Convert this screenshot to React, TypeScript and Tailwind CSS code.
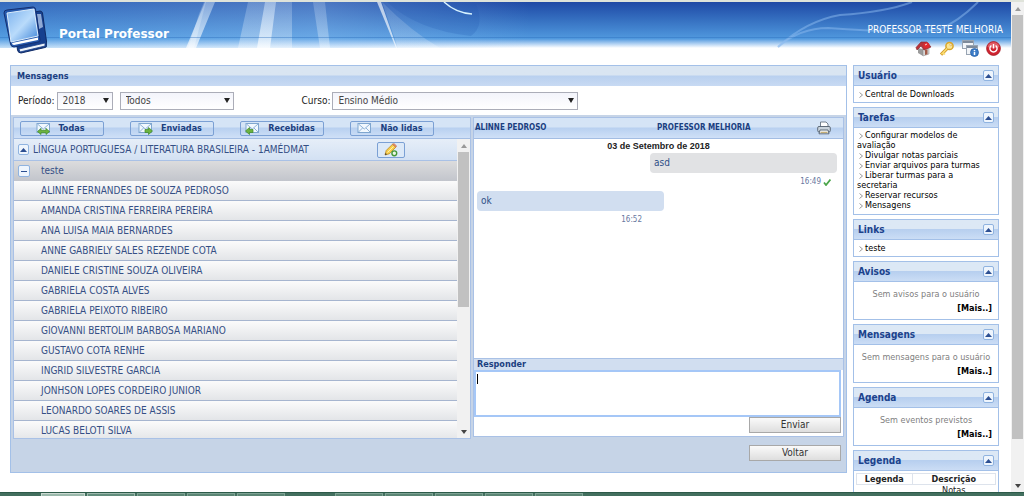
import React, { useState } from 'react';
import { clsx } from 'clsx';

const students = [
  'ALINNE FERNANDES DE SOUZA PEDROSO',
  'AMANDA CRISTINA FERREIRA PEREIRA',
  'ANA LUISA MAIA BERNARDES',
  'ANNE GABRIELY SALES REZENDE COTA',
  'DANIELE CRISTINE SOUZA OLIVEIRA',
  'GABRIELA COSTA ALVES',
  'GABRIELA PEIXOTO RIBEIRO',
  'GIOVANNI BERTOLIM BARBOSA MARIANO',
  'GUSTAVO COTA RENHE',
  'INGRID SILVESTRE GARCIA',
  'JONHSON LOPES CORDEIRO JUNIOR',
  'LEONARDO SOARES DE ASSIS',
  'LUCAS BELOTI SILVA',
];

const tasks = [
  'Configurar modelos de avaliação',
  'Divulgar notas parciais',
  'Enviar arquivos para turmas',
  'Liberar turmas para a secretaria',
  'Reservar recursos',
  'Mensagens',
];

const UpIcon = () => (
  <svg width="7" height="4" viewBox="0 0 7 4">
    <path d="M3.5 0L7 4H0z" fill="#2c4f92" />
  </svg>
);

const MailIcon: React.FC<{ arrows?: 'both' | 'left' | 'right' }> = ({ arrows }) => (
  <svg width="15" height="13" viewBox="0 0 15 13">
    <rect x="1" y="1.5" width="12.5" height="9" fill="#f1f8fe" stroke="#7fa6cf" />
    <path d="M1.5 2l5.8 5L13 2M1.5 10l4-4M13 10L9 6" fill="none" stroke="#8fb2d8" />
    {arrows === 'both' && (
      <path d="M1.500 9.500L5 6.500v1.800h5V6.500l3.500 3-3.500 3v-1.700H5v1.700z" fill="#6db33f" stroke="#3d8a27" strokeWidth=".7" />
    )}
    {arrows === 'right' && (
      <path d="M14.500 9L10.500 5.500v2H7v3h3.500v2z" fill="#6db33f" stroke="#3d8a27" strokeWidth=".7" />
    )}
    {arrows === 'left' && (
      <path d="M.5 9l4-3.500v2H8v3H4.500v2z" fill="#6db33f" stroke="#3d8a27" strokeWidth=".7" />
    )}
  </svg>
);

const BooksIcon = () => (
  <svg width="44" height="48" viewBox="0 0 44 48">
    <defs>
      <linearGradient id="cover" x1="0" y1="0" x2="1" y2="1">
        <stop offset="0" stopColor="#7cb2ee" />
        <stop offset=".5" stopColor="#b9dbfb" />
        <stop offset="1" stopColor="#3b83d8" />
      </linearGradient>
    </defs>
    <path d="M10 10l27-5q2 0 2.500 2L44 39q0 2-2 2.500L18 47q-3 0-3.500-3z" fill="#16408f" stroke="#102b66" />
    <path d="M34 8l4 0 2 13-4 2z" fill="#8fa9d4" />
    <path d="M16 43l26-6v3l-25 6z" fill="#eef4fb" stroke="#1c3f86" strokeWidth=".8" />
    <path d="M1 7q0-3 3-3L30 1q2 0 2.500 2L37 34q0 2-2 2L11 41q-3 0-3.500-3z" fill="#2458ad" stroke="#142f70" />
    <path d="M4 7L31 3l4 27-27 6z" fill="url(#cover)" stroke="#dcecfb" />
    <path d="M9 37l26-5.500v2.500L11 39q-2 0-2-2z" fill="#fff" />
  </svg>
);

const HouseIcon = () => (
  <svg width="17" height="16" viewBox="0 0 17 16">
    <path d="M3 7l5 1v7l-5-3z" fill="#9b9b9b" />
    <path d="M8 8l6-2v7l-6 2z" fill="#d8d8d8" stroke="#888" strokeWidth=".5" />
    <path d="M10 9l2.500-.7v5l-2.500.8z" fill="#a15a48" />
    <path d="M1 6.500L6 1l6 0 4 5-7 3-3-4-4 4z" fill="#b9323a" stroke="#7e2028" strokeWidth=".6" />
    <circle cx="11.500" cy="4.500" r="3" fill="#e02a2f" />
    <path d="M10 4l2-1" stroke="#fff" strokeWidth=".8" />
  </svg>
);

const KeyIcon = () => (
  <svg width="16" height="16" viewBox="0 0 16 16">
    <circle cx="10.500" cy="5" r="3.600" fill="#fbe594" stroke="#d9a52a" strokeWidth="1.500" />
    <circle cx="11.800" cy="3.800" r="1" fill="#fff" stroke="#c58f1c" strokeWidth=".5" />
    <path d="M8.300 7.300L2 13.700" stroke="#d09a28" strokeWidth="3.200" fill="none" />
    <path d="M8.300 7.300L2.500 13.200M4.500 12l1.500 1.500" stroke="#fbdd70" strokeWidth="1.600" fill="none" />
  </svg>
);

const WindowsIcon = () => (
  <svg width="17" height="17" viewBox="0 0 17 17">
    <rect x=".5" y=".5" width="11" height="8" fill="#f2f5f8" stroke="#98a4b2" />
    <path d="M1 2h10" stroke="#7d8a9a" strokeWidth="2" />
    <rect x="4.500" y="5.500" width="11" height="9" fill="#f2f5f8" stroke="#98a4b2" />
    <path d="M5 7h10" stroke="#7d8a9a" strokeWidth="2" />
    <circle cx="12.500" cy="12.500" r="4" fill="#3c7cc7" stroke="#1f5aa5" strokeWidth=".7" />
    <path d="M12.500 10v1.300M12.500 12v3" stroke="#fff" strokeWidth="1.500" />
  </svg>
);

const PowerIcon = () => (
  <svg width="15" height="15" viewBox="0 0 15 15">
    <circle cx="7.500" cy="7.500" r="6.900" fill="#cf2430" stroke="#a51a24" strokeWidth=".8" />
    <path d="M1.500 6a6.200 6.200 0 0 1 12 0q-6 2.500-12 0z" fill="#e8747b" opacity=".7" />
    <path d="M5.400 4.500a3.600 3.600 0 1 0 4.200 0M7.500 3v4.500" fill="none" stroke="#fff" strokeWidth="1.400" />
  </svg>
);

const PrinterIcon = () => (
  <svg width="14" height="14" viewBox="0 0 14 14">
    <path d="M3.500 6V1h5.500l2 2v3z" fill="#fff" stroke="#667482" strokeWidth=".9" />
    <rect x=".7" y="5.500" width="12.600" height="5.500" rx="1.300" fill="#c9d3dc" stroke="#52606e" strokeWidth=".9" />
    <path d="M3 9h8l1 3.800H2z" fill="#f3f7fb" stroke="#52606e" strokeWidth=".9" />
    <path d="M3.500 11.300h7" stroke="#b99b55" />
  </svg>
);

const PencilIcon = () => (
  <svg width="14" height="14" viewBox="0 0 14 14">
    <path d="M1 12l1.200-4.500L8.500 1.200l3.300 3L5.500 10.700z" fill="#f8cf4d" stroke="#bb8620" strokeWidth=".8" />
    <path d="M8.500 1.200l3.300 3 .9-1.200L10 .5z" fill="#e98a6b" stroke="#bb6c40" strokeWidth=".5" />
    <path d="M3.500 9.500l6-6" stroke="#fff0a8" />
    <path d="M1 12l.6-2 1.400 1.300z" fill="#333" />
    <circle cx="10.300" cy="10.300" r="2.400" fill="#eef7e7" stroke="#45983a" strokeWidth="1.400" />
  </svg>
);

// Light streaks over the header gradient
const HeaderArt = () => (
  <svg className="absolute inset-0 h-full w-full" viewBox="0 0 1011 46" preserveAspectRatio="none">
    <defs>
      <linearGradient id="ray" x1="0" y1="0" x2="0" y2="1">
        <stop offset="0" stopColor="#e4f2ff" stopOpacity=".4" />
        <stop offset="1" stopColor="#fff" stopOpacity=".7" />
      </linearGradient>
      <linearGradient id="glow" x1="0" y1="0" x2="1" y2="0">
        <stop offset="0" stopColor="#5aa6e8" stopOpacity=".35" />
        <stop offset=".6" stopColor="#9ccbf7" stopOpacity=".35" />
        <stop offset="1" stopColor="#9ccbf7" stopOpacity="0" />
      </linearGradient>
    </defs>
    <rect x="0" y="0" width="530" height="46" fill="url(#glow)" />
    <path d="M205 0h10l-19 46h-10z" fill="url(#ray)" />
    <path d="M199 12l5-12h2l-12 46h-6z" fill="url(#ray)" opacity=".5" />
    <path d="M248 0h44v46h-54z" fill="url(#ray)" opacity=".5" />
    <path d="M265 0h11l-6 46h-13z" fill="url(#ray)" />
    <path d="M313 0h12l5 46h-10z" fill="url(#ray)" opacity=".5" />
    <path d="M377 0h4l16 46h-1z" fill="#fff" opacity=".65" />
    <path d="M382 0q30 30 58 46h-42z" fill="url(#ray)" opacity=".3" />
    <path d="M387 0q30 28 84 34 14-10 5-32z" fill="#1f55ae" opacity=".2" />
    <path d="M444 0q12 11 28 12" fill="none" stroke="#d6f2ff" strokeWidth="1.500" />
    <path d="M778 45q28-26 62-32 46-3 72-13" fill="none" stroke="#8ebcf0" strokeWidth="2" opacity=".5" />
    <path d="M778 45q22-19 50-19 60 5 110 2 20-8 40-28" fill="none" stroke="#8ebcf0" strokeWidth="2" opacity=".5" />
    <path d="M0 35.500h1011" stroke="#2a6cbc" opacity=".4" />
  </svg>
);

const CollapseButton: React.FC<{ label: string; onClick?: () => void }> = ({ label, onClick }) => (
  <button
    aria-label={label}
    onClick={onClick}
    className="flex h-[11px] w-[11px] shrink-0 items-center justify-center rounded-xs border border-[#8fb3e0] bg-[#eef5fd]"
  >
    <UpIcon />
  </button>
);

interface PanelProps {
  title: string;
  className?: string;
  children: React.ReactNode;
}

const SidePanel: React.FC<PanelProps> = ({ title, className, children }) => {
  const [open, setOpen] = useState(true);
  return (
    <section className="shrink-0 border border-[#a3c0e8] bg-white">
      <div className="flex h-5 items-center justify-between border-b border-[#a3c0e8] bg-linear-to-b from-[#dce8f5] from-45% via-[#b7cfef] via-50% to-[#cbddf5] pr-1 pl-1">
        <h2 className="text-[10px] font-bold text-[#1b428c]">{title}</h2>
        <CollapseButton label={title} onClick={() => setOpen(!open)} />
      </div>
      {open && <div className={clsx('text-[9px]', className)}>{children}</div>}
    </section>
  );
};

const SideLink: React.FC<{ text: string }> = ({ text }) => (
  <a href="#" className="block pr-2 pl-[3px] leading-[10px] text-black">
    <svg className="mr-0.5 ml-0.5 inline-block" width="4" height="6" viewBox="0 0 4 6">
      <path d="M.5.5L3.500 3 .5 5.500" fill="none" stroke="#999" />
    </svg>
    {text}
  </a>
);

const EmptyPanel: React.FC<{ title: string; text: string }> = ({ title, text }) => (
  <SidePanel title={title} className="h-[37px] pt-1 whitespace-nowrap">
    <p className="text-center leading-4 text-[#808080]">{text}</p>
    <p className="pr-1.5 text-right leading-[13px]">
      <a href="#" className="font-bold text-black">[Mais..]</a>
    </p>
  </SidePanel>
);

interface SelectProps {
  id: string;
  value: string;
  className: string;
  label?: string;
}

const Select: React.FC<SelectProps> = ({ id, value, className, label }) => (
  <span className="relative flex">
    <select
      id={id}
      aria-label={label}
      className={clsx(
        'h-[18px] appearance-none border border-[#abadb8] bg-linear-to-b from-[#f3f4fb] to-white px-[5px] leading-4 text-[#444]',
        className
      )}
    >
      <option>{value}</option>
    </select>
    <svg className="pointer-events-none absolute top-1.5 right-1" width="6" height="5" viewBox="0 0 6 5">
      <path d="M0 0h6L3 5z" fill="#222" />
    </svg>
  </span>
);

const filters: { label: string; arrows?: 'both' | 'left' | 'right' }[] = [
  { label: 'Todas', arrows: 'both' },
  { label: 'Enviadas', arrows: 'right' },
  { label: 'Recebidas', arrows: 'left' },
  { label: 'Não lidas' },
];

const MessageList = () => (
  <div className="w-[458px] shrink-0 border border-[#a9c1e6] bg-white">
    <div className="flex h-[21px] items-center gap-[26px] border-b border-[#a3bde3] bg-linear-to-b from-[#d5e4f6] from-45% via-[#b8d0f0] via-50% to-[#cfe0f7] pl-1.5">
      {filters.map((f) => (
        <button
          key={f.label}
          className="flex h-[15px] w-[84px] items-center justify-center gap-2 rounded-xs border border-[#7ba0d4] pr-1 text-[9px] font-bold text-[#1b3f80]"
        >
          <MailIcon arrows={f.arrows} />
          {f.label}
        </button>
      ))}
    </div>
    <div className="flex h-[299px] overflow-hidden">
      <div className="min-w-0 flex-1 text-[#354f85]">
        <div className="flex h-[22px] items-center border-b border-[#a9c1e6] bg-linear-to-b from-[#e6eef8] to-[#d3e1f3] pl-1">
          <CollapseButton label="Recolher disciplina" />
          <span className="w-[348px] pl-1">LÍNGUA PORTUGUESA / LITERATURA BRASILEIRA - 1AMÉDMAT</span>
          <button
            aria-label="Nova mensagem"
            className="flex h-4 w-7 items-center justify-center rounded-xs border border-[#7ba0d4] bg-[#dce9f8]"
          >
            <PencilIcon />
          </button>
        </div>
        <div className="flex h-5 items-center gap-[11px] bg-linear-to-b from-[#dcdcdd] to-[#c2c5cc] pl-1">
          <button
            aria-label="Recolher turma"
            className="flex h-3 w-3 items-center justify-center rounded-xs border border-[#8fb3e0] bg-[#eef5fd]"
          >
            <span className="h-px w-1.5 bg-[#2c4f92]" />
          </button>
          teste
        </div>
        <ul>
          {students.map((name) => (
            <li key={name} className="h-5 border-b border-[#a6b5cf] bg-linear-to-b from-[#fbfbfb] to-[#e3e5e8] pl-[27px] leading-[19px]">
              {name}
            </li>
          ))}
        </ul>
      </div>
      <Scrollbar thumb="h-[155px]" />
    </div>
  </div>
);

const Scrollbar: React.FC<{ thumb: string }> = ({ thumb }) => (
  <div className="flex w-[13px] shrink-0 flex-col items-center bg-[#f1f1f1]">
    <div className="flex h-[13px] items-center">
      <svg width="6" height="4" viewBox="0 0 6 4">
        <path d="M3 0l3 4H0z" fill="#999" />
      </svg>
    </div>
    <div className={clsx('w-[11px] bg-[#c1c1c1]', thumb)} />
    <div className="mt-auto flex h-[13px] items-center">
      <svg width="6" height="4" viewBox="0 0 6 4">
        <path d="M3 4l3-4H0z" fill="#444" />
      </svg>
    </div>
  </div>
);

const actionButton =
  'h-4 w-[92px] border border-[#a8a8a8] bg-linear-to-b from-[#fafafa] to-[#dedede] text-[#333]';

const Conversation = () => {
  const [reply, setReply] = useState('');
  return (
    <div className="flex h-[320px] min-w-0 flex-1 flex-col border border-[#a9c1e6] bg-white">
      <div className="flex h-[21px] items-center border-b border-[#a3bde3] bg-linear-to-b from-[#d5e4f6] from-45% via-[#b8d0f0] via-50% to-[#cfe0f7] pr-3 pl-px text-[8px] leading-4 font-bold text-[#1b3f80]">
        <span className="w-[182px]">ALINNE PEDROSO</span>
        <span>PROFESSOR MELHORIA</span>
        <button aria-label="Imprimir" className="ml-auto">
          <PrinterIcon />
        </button>
      </div>
      <div className="flex-1 text-[#2f4f87]">
        <p className="text-center font-['Liberation_Sans'] text-[9px] leading-[14px] font-bold text-[#222]">
          03 de Setembro de 2018
        </p>
        <p className="mr-1.5 ml-auto h-5 w-[187px] rounded bg-[#e1e2e4] px-1 leading-5">asd</p>
        <p className="flex h-[18px] items-center justify-end gap-0.5 pr-3 text-[8px] text-[#6878a0]">
          16:49
          <svg width="8" height="7" viewBox="0 0 8 7">
            <path d="M1 3.500L3 6l4.500-5.500" fill="none" stroke="#4aa54a" strokeWidth="1.800" />
          </svg>
        </p>
        <p className="ml-[3px] h-5 w-[187px] rounded bg-[#d1def0] px-1 leading-5">ok</p>
        <p className="w-[168px] text-right text-[8px] leading-[18px] text-[#6878a0]">16:52</p>
      </div>
      <label htmlFor="reply" className="h-3 border-t border-[#a9c1e6] bg-[#d1def0] pl-[3px] text-[9px] leading-[11px] font-bold text-[#1b3f80]">
        Responder
      </label>
      <div className="relative mr-0.5 flex">
        <textarea
          id="reply"
          autoFocus
          value={reply}
          onChange={(e) => setReply(e.target.value)}
          className="h-[47px] flex-1 resize-none border-2 border-[#a5c7f7] px-0.5 caret-transparent outline-none"
        />
        {!reply && <span className="pointer-events-none absolute top-1 left-[3px] h-[10px] w-px bg-black" />}
      </div>
      <div className="flex h-[19px] justify-end pr-0.5">
        <button className={actionButton}>Enviar</button>
      </div>
    </div>
  );
};

export default function App() {
  return (
    <div className="flex h-screen flex-col overflow-hidden bg-white font-['DejaVu_Sans_Condensed','DejaVu_Sans',sans-serif] text-[10px] leading-3 text-[#222]">
      <div className="h-0.5 shrink-0 bg-[#dfe3da]" />
      <div className="flex min-h-0 flex-1">
        <div className="flex min-w-0 flex-1 flex-col">
          <header className="relative flex h-[63px] shrink-0 justify-between">
            <div className="absolute inset-x-0 top-0 h-[46px] bg-linear-to-b from-[#2049a5] via-[#5199de] via-80% to-white">
              <HeaderArt />
            </div>
            <div className="relative flex gap-3 pt-1 pl-[3px]">
              <BooksIcon />
              <h1 className="pt-5 font-['DejaVu_Sans'] text-[12px] leading-4 font-bold text-white">Portal Professor</h1>
            </div>
            <div className="relative pt-5 pr-2">
              <p className="text-right leading-4 text-white">PROFESSOR TESTE MELHORIA</p>
              <div className="flex items-center justify-end gap-[7px] pt-0.5 pr-0.5">
                <button aria-label="Início"><HouseIcon /></button>
                <button aria-label="Alterar senha"><KeyIcon /></button>
                <button aria-label="Janelas"><WindowsIcon /></button>
                <button aria-label="Sair"><PowerIcon /></button>
              </div>
            </div>
          </header>

          <div className="flex min-h-0 flex-1 items-start gap-1.5 overflow-hidden pr-3 pl-2.5">
            <main className="min-w-0 flex-1 border border-[#a3c0e8] bg-[#c6d4e7]">
              <h2 className="h-5 bg-linear-to-b from-[#d9e5f2] from-45% via-[#b9d0ef] via-50% to-[#c8daf3] pl-1.5 text-[9px] leading-5 font-bold text-[#1b3f80]">
                Mensagens
              </h2>
              <div className="flex h-[29px] items-center bg-white pl-[7px]">
                <label htmlFor="periodo" className="mr-0.5">Período:</label>
                <Select id="periodo" value="2018" className="w-14" />
                <div className="ml-[7px]">
                  <Select id="situacao" label="Situação" value="Todos" className="w-[114px]" />
                </div>
                <label htmlFor="curso" className="mr-0.5 ml-[68px]">Curso:</label>
                <Select id="curso" value="Ensino Médio" className="w-[246px]" />
              </div>
              <div className="flex items-start gap-0.5 px-0.5 pt-0.5">
                <MessageList />
                <Conversation />
              </div>
              <div className="flex h-[33px] items-start justify-end pt-1.5 pr-[5px]">
                <button className={actionButton}>Voltar</button>
              </div>
            </main>

            <aside className="flex w-[146px] shrink-0 flex-col gap-1">
              <SidePanel title="Usuário" className="py-[3px]">
                <SideLink text="Central de Downloads" />
              </SidePanel>
              <SidePanel title="Tarefas" className="pt-0.5 pb-1">
                {tasks.map((t) => (
                  <SideLink key={t} text={t} />
                ))}
              </SidePanel>
              <SidePanel title="Links" className="py-[3px]">
                <SideLink text="teste" />
              </SidePanel>
              <EmptyPanel title="Avisos" text="Sem avisos para o usuário" />
              <EmptyPanel title="Mensagens" text="Sem mensagens para o usuário" />
              <EmptyPanel title="Agenda" text="Sem eventos previstos" />
              <SidePanel title="Legenda" className="p-0.5">
                <table className="w-full text-center">
                  <thead>
                    <tr>
                      <th className="w-2/5 border border-[#dde3ec] p-0 leading-[10px]">Legenda</th>
                      <th className="border border-[#dde3ec] p-0 leading-[10px]">Descrição</th>
                    </tr>
                  </thead>
                  <tbody>
                    <tr className="leading-[10px]">
                      <td />
                      <td>Notas</td>
                    </tr>
                  </tbody>
                </table>
              </SidePanel>
            </aside>
          </div>
        </div>
        <Scrollbar thumb="h-[424px]" />
      </div>
      <div className="flex h-1 shrink-0 gap-0.5 border-t border-[#2d5a49] bg-[#426f5e] pl-[41px]">
        <span className="w-11 border border-b-0 border-[#c9d8d0] bg-[#9ab8ab]" />
        <span className="w-12 border border-b-0 border-[#9cb8ac] bg-[#628d7c]" />
        <span className="w-12 border border-b-0 border-[#7ea394] bg-[#5b8574]" />
        <span className="w-12 border border-b-0 border-[#7ea394] bg-[#5b8574]" />
        <span className="w-12 border border-b-0 border-[#7ea394] bg-[#5b8574]" />
        <span className="ml-12 w-12 border border-b-0 border-[#7ea394] bg-[#5b8574]" />
        <span className="w-12 border border-b-0 border-[#7ea394] bg-[#5b8574]" />
        <span className="w-12 border border-b-0 border-[#7ea394] bg-[#5b8574]" />
        <span className="w-12 border border-b-0 border-[#7ea394] bg-[#5b8574]" />
        <span className="w-12 border border-b-0 border-[#7ea394] bg-[#5b8574]" />
      </div>
    </div>
  );
}
